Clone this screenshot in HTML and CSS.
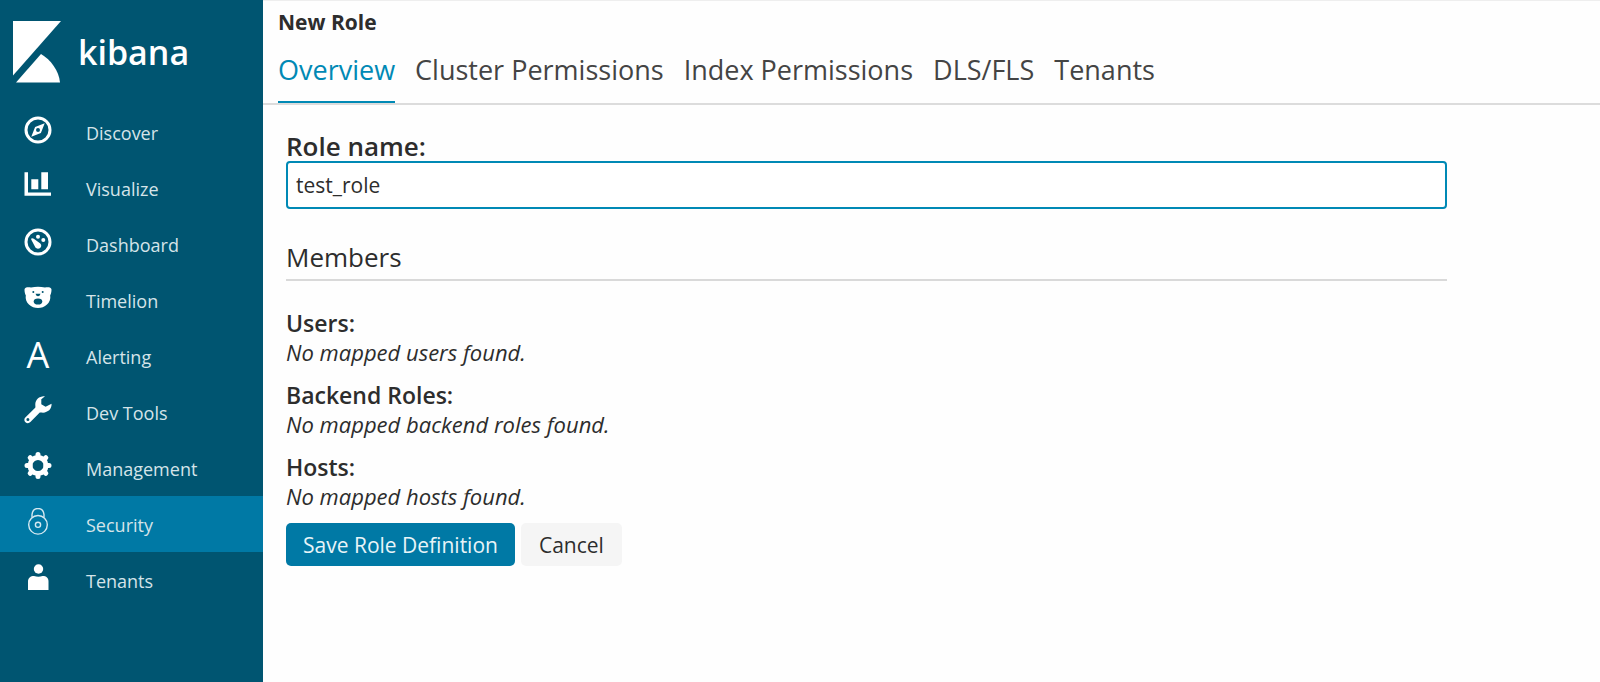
FILE: index.html
```html
<!DOCTYPE html>
<html lang="en">
<head>
<meta charset="utf-8">
<title>Kibana - New Role</title>
<link rel="stylesheet" href="styles.css">
</head>
<body>
<div class="app">
  <aside class="sidebar">
    <a class="brand" href="#">
      <svg class="brand-mark" viewBox="0 0 48 62" aria-hidden="true"><path d="M0 0H48L0 54.500Z"/><path d="M3 61.500L28 33C38 39 46 50 47 61.500Z"/></svg>
      <span class="brand-name">kibana</span>
    </a>
    <nav class="nav">
      <a class="nav-item" href="#">
        <svg class="icon" viewBox="0 0 28 28" aria-hidden="true"><circle class="line" cx="14" cy="14" r="12"/><path fill-rule="evenodd" d="M20.700 7.300L16.900 16.900L7.300 20.700L11.100 11.100ZM14 12A2 2 0 1 0 14 16A2 2 0 1 0 14 12Z"/></svg>
        <span class="nav-label">Discover</span>
      </a>
      <a class="nav-item" href="#">
        <svg class="icon" viewBox="0 0 28 28" aria-hidden="true"><path d="M.5 .3H4V20.500H27V23.700H.5ZM7.300 7.300H14.300V17.300H7.300ZM17.300 .3H24V17.300H17.300Z"/></svg>
        <span class="nav-label">Visualize</span>
      </a>
      <a class="nav-item" href="#">
        <svg class="icon" viewBox="0 0 28 28" aria-hidden="true"><circle class="line" cx="14" cy="14" r="12"/><path d="M7.200 11.500C7 10 8.500 9.700 9.800 10.800L16.300 15.500C17.800 17 17.500 19.300 15.800 20.200C14 21.200 11.500 20.500 10.900 18.500Z"/><circle cx="14" cy="8.700" r="2"/><circle cx="19.300" cy="12" r="2"/></svg>
        <span class="nav-label">Dashboard</span>
      </a>
      <a class="nav-item" href="#">
        <svg class="icon" viewBox="0 0 28 28" aria-hidden="true"><path d="M.5 5.500C.7 3.400 3.500 3 7 3.500Q14 1.800 21 3.500C24.500 3 27.300 3.400 27.500 5.500C27.500 8 27 10 26.200 11.200C27.500 19 20.500 24 14 24S.5 19 1.800 11.200C1 10 .5 8 .5 5.500Z"/><ellipse class="cutout" cx="14" cy="17.500" rx="4.300" ry="3.100"/><path class="cutout" d="M11.500 9.800H16.500L15.500 11.700L14 12.300L12.500 11.700Z"/><circle class="cutout" cx="9.300" cy="8" r="1"/><circle class="cutout" cx="18.700" cy="8" r="1"/></svg>
        <span class="nav-label">Timelion</span>
      </a>
      <a class="nav-item" href="#">
        <span class="icon letter" aria-hidden="true">A</span>
        <span class="nav-label">Alerting</span>
      </a>
      <a class="nav-item" href="#">
        <svg class="icon" viewBox="0 0 28 28" aria-hidden="true"><path fill-rule="evenodd" d="M21 .3C16 -.5 11 3.500 11.300 9C11.400 10.500 11.500 11.400 11.200 11.800L1.300 21.500C-.2 23.100 .3 25.200 1.500 26.300C2.800 27.500 5 27.600 6.400 26.100L15.500 16.800C16 16.400 17.500 16.700 19 16.700C24.500 16.500 28 12.500 27.500 7.700L21.600 10.800L17.300 8.300V3.200ZM3.900 22A1.500 1.500 0 1 1 3.900 25A1.500 1.500 0 1 1 3.900 22Z"/></svg>
        <span class="nav-label">Dev Tools</span>
      </a>
      <a class="nav-item" href="#">
        <svg class="icon" viewBox="0 0 28 28" aria-hidden="true"><circle class="gear-ring" cx="14" cy="13.500" r="8"/><path class="gear-teeth" d="M14 2.500V5.500M14 21.500V24.500M3 13.500H6M22 13.500H25M6.200 5.700L8.300 7.800M19.700 19.200L21.800 21.300M21.800 5.700L19.700 7.800M8.300 19.200L6.200 21.300"/></svg>
        <span class="nav-label">Management</span>
      </a>
      <a class="nav-item active" href="#" aria-current="page">
        <svg class="icon" viewBox="0 0 28 28" aria-hidden="true"><circle class="thin" cx="14" cy="16.800" r="9.300"/><circle class="thin" cx="14" cy="16.800" r="2.600"/><path class="thin" d="M8 9.500V6.500C8.500 2.500 11 .5 14 .5S19.500 2.500 20 6.500V9.500"/></svg>
        <span class="nav-label">Security</span>
      </a>
      <a class="nav-item" href="#">
        <svg class="icon" viewBox="0 0 28 28" aria-hidden="true"><circle cx="14.500" cy="5" r="4.700"/><path d="M4 26V17.500C4 14 6.500 12 10 12Q14.500 13.500 18.500 12C22.500 12 24.500 14 24.500 17.500V26Z"/></svg>
        <span class="nav-label">Tenants</span>
      </a>
    </nav>
  </aside>

  <main class="main">
    <header class="header">
      <h1 class="title">New Role</h1>
      <nav class="tabs">
        <a class="tab selected" href="#">Overview</a>
        <a class="tab" href="#">Cluster Permissions</a>
        <a class="tab" href="#">Index Permissions</a>
        <a class="tab" href="#">DLS/FLS</a>
        <a class="tab" href="#">Tenants</a>
      </nav>
    </header>
    <form class="form">
      <label class="field-label" for="role-name">Role name:</label>
      <input class="field" id="role-name" type="text" value="test_role">
      <h2 class="section">Members</h2>
      <dl class="members">
        <dt>Users:</dt>
        <dd>No mapped users found.</dd>
        <dt>Backend Roles:</dt>
        <dd>No mapped backend roles found.</dd>
        <dt>Hosts:</dt>
        <dd>No mapped hosts found.</dd>
      </dl>
      <div class="actions">
        <button class="button primary" type="submit">Save Role Definition</button>
        <button class="button" type="button">Cancel</button>
      </div>
    </form>
  </main>
</div>
</body>
</html>
```
FILE: styles.css
```css
* {
  box-sizing: border-box;
}

body {
  margin: 0;
  color: #2d2d2d;
  background: #fefefe;
  font-family: "Open Sans", "Noto Sans", sans-serif;
}

a {
  color: inherit;
  text-decoration: none;
}

.app {
  display: flex;
  min-height: 100vh;
}

.sidebar {
  flex: 0 0 263px;
  color: #fff;
  background: #005571;
}

.brand {
  display: flex;
  gap: 17px;
  height: 104px;
  padding: 21px 13px 0;
}

.brand-mark {
  width: 48px;
  height: 62px;
  fill: #fff;
}

.brand-name {
  font-size: 34px;
  font-weight: 600;
  line-height: 62px;
}

.nav-item {
  display: flex;
  gap: 34px;
  height: 56px;
  padding: 12px 24px 0;
}

.nav-item.active {
  background: #0079a5;
}

.icon {
  flex: none;
  width: 28px;
  height: 28px;
  fill: #fff;
}

.icon .line {
  fill: none;
  stroke: #fff;
  stroke-width: 3;
}

.icon .thin {
  fill: none;
  stroke: #d5e9f1;
  stroke-width: 1.4;
}

.icon .cutout {
  fill: #005571;
}

.icon .gear-ring {
  fill: none;
  stroke: #fff;
  stroke-width: 5;
}

.gear-teeth {
  stroke: #fff;
  stroke-width: 5;
  stroke-linecap: round;
}

.letter {
  font-size: 36px;
  line-height: 30px;
  text-align: center;
}

.nav-label {
  color: #d5e4e9;
  font-size: 18px;
  line-height: 34px;
}

.main {
  flex: 1;
  min-width: 0;
  border-top: 1px solid #eee;
}

.header {
  padding: 8px 15px 0;
  border-bottom: 2px solid #dcdcdc;
}

.title {
  margin: 0;
  font-size: 21px;
  line-height: 26px;
}

.tabs {
  display: flex;
  gap: 20px;
}

.tab {
  padding: 17px 0 13px;
  border-bottom: 2px solid transparent;
  color: #444;
  font-size: 27px;
  line-height: 36px;
}

.tab.selected {
  color: #0089b5;
  border-color: #0089b5;
}

.form {
  margin: 0 153px 0 23px;
  padding-top: 27px;
}

.field-label {
  display: block;
  font-size: 26px;
  font-weight: 600;
  line-height: 29px;
}

.field {
  display: block;
  width: 100%;
  height: 48px;
  padding: 0 8px;
  border: 2px solid #0089b5;
  border-radius: 4px;
  color: #2d2d2d;
  background: #fff;
  font: inherit;
  font-size: 21px;
  outline: none;
}

.section {
  margin: 31px 0 28px;
  padding-bottom: 4px;
  border-bottom: 2px solid #d9d9d9;
  font-size: 26px;
  font-weight: 400;
  line-height: 35px;
}

.members {
  margin: 0;
  font-size: 22px;
}

.members dt {
  font-size: 23px;
  font-weight: 600;
  line-height: 29px;
}

.members dd {
  margin: 0 0 15px;
  font-style: italic;
  line-height: 28px;
}

.members dd:last-child {
  margin-bottom: 13px;
}

.actions {
  display: flex;
  gap: 6px;
}

.button {
  height: 43px;
  padding: 0 18px;
  border: 0;
  border-radius: 5px;
  color: #2d2d2d;
  background: #f5f5f5;
  font: inherit;
  font-size: 21px;
}

.button.primary {
  padding: 0 17px;
  color: #e8f4f8;
  background: #0079a5;
}
```
